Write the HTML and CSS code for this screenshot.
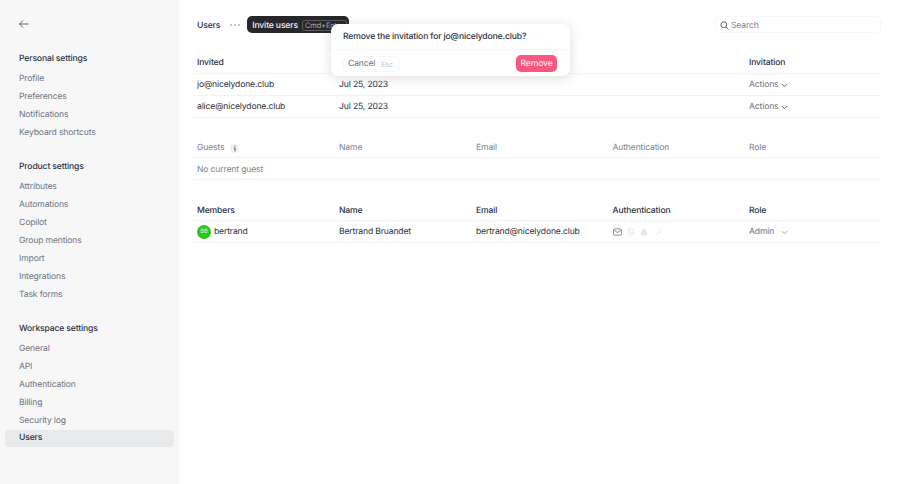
FILE: index.html
```html
<!DOCTYPE html>
<html>
  <head>
    <title>Users</title>
    <link rel="stylesheet" href="styles.css">
  </head>
  <body>
    <div class="sidebar">
      <svg class="back" width="12" height="12" viewBox="0 0 12 12" fill="none" stroke="#5c6470" stroke-width="1">
        <path d="M10.5 6H1.5M5 2.5L1.5 6L5 9.5"/>
      </svg>
      <div class="grupo">
        <div class="grupoTitulo">Personal settings</div>
        <div class="item">Profile</div>
        <div class="item">Preferences</div>
        <div class="item">Notifications</div>
        <div class="item">Keyboard shortcuts</div>
      </div>
      <div class="grupo">
        <div class="grupoTitulo">Product settings</div>
        <div class="item">Attributes</div>
        <div class="item">Automations</div>
        <div class="item">Copilot</div>
        <div class="item">Group mentions</div>
        <div class="item">Import</div>
        <div class="item">Integrations</div>
        <div class="item">Task forms</div>
      </div>
      <div class="grupo">
        <div class="grupoTitulo">Workspace settings</div>
        <div class="item">General</div>
        <div class="item">API</div>
        <div class="item">Authentication</div>
        <div class="item">Billing</div>
        <div class="item">Security log</div>
        <div class="item ativo">Users</div>
      </div>
    </div>

    <div class="main">
      <div class="topo">
        <span class="topoTitulo">Users</span>
        <svg class="dots" width="10" height="4" viewBox="0 0 10 4" fill="#5c6470">
          <circle cx="1" cy="2" r="0.7"/><circle cx="5" cy="2" r="0.7"/><circle cx="9" cy="2" r="0.7"/>
        </svg>
        <div class="invite">Invite users <span class="atalho">Cmd+Enter</span></div>
        <div class="busca">
          <svg width="9" height="9" viewBox="0 0 10 10" fill="none" stroke="#4a5160" stroke-width="1">
            <circle cx="4.2" cy="4.2" r="3.2"/><path d="M6.6 6.6L9.4 9.4"/>
          </svg>
          <span>Search</span>
        </div>
      </div>

      <div class="tabela">
        <div class="linha cabecalho">
          <div>Invited</div><div></div><div></div><div></div><div>Invitation</div>
        </div>
        <div class="linha">
          <div>jo@nicelydone.club</div><div>Jul 25, 2023</div><div></div><div></div>
          <div class="acoes">Actions
            <svg width="7" height="5" viewBox="0 0 7 5" fill="none" stroke="#5c6470"><path d="M0.8 1L3.5 3.8L6.2 1"/></svg>
          </div>
        </div>
        <div class="linha">
          <div>alice@nicelydone.club</div><div>Jul 25, 2023</div><div></div><div></div>
          <div class="acoes">Actions
            <svg width="7" height="5" viewBox="0 0 7 5" fill="none" stroke="#5c6470"><path d="M0.8 1L3.5 3.8L6.2 1"/></svg>
          </div>
        </div>
      </div>

      <div class="tabela convidados">
        <div class="linha cabecalho apagado baixo">
          <div class="comInfo">Guests
            <svg width="9" height="9" viewBox="0 0 9 9"><circle cx="4.5" cy="4.5" r="4.5" fill="#f0f0f2"/><path d="M5 1.6V2.6M3.8 4H5V7.4" fill="none" stroke="#4a5160" stroke-width="1"/></svg>
          </div>
          <div>Name</div><div>Email</div><div>Authentication</div><div>Role</div>
        </div>
        <div class="linha apagado baixo"><div>No current guest</div></div>
      </div>

      <div class="tabela">
        <div class="linha cabecalho baixo">
          <div>Members</div><div>Name</div><div>Email</div><div>Authentication</div><div>Role</div>
        </div>
        <div class="linha">
          <div class="membro"><span class="avatar">BB</span>bertrand</div>
          <div>Bertrand Bruandet</div>
          <div>bertrand@nicelydone.club</div>
          <div class="auth">
            <svg width="9" height="8" viewBox="0 0 10 8" fill="none" stroke="#5c6470" stroke-width="0.8"><rect x="0.5" y="0.5" width="9" height="7" rx="1.5"/><path d="M1 2L5 4.6L9 2"/></svg>
            <span class="authG">G</span>
            <svg width="8" height="8" viewBox="0 0 8 8" fill="#e6e7ea"><path d="M2 3.5V2.6a2 2 0 0 1 4 0V3.5H7V7.5H1V3.5Z"/></svg>
            <svg width="9" height="9" viewBox="0 0 9 9" fill="none" stroke="#eeeff1"><circle cx="6" cy="3" r="2"/><path d="M4.5 4.5L1 8"/></svg>
          </div>
          <div class="role">Admin
            <svg width="7" height="5" viewBox="0 0 7 5" fill="none" stroke="#a4a9b2"><path d="M0.8 1L3.5 3.8L6.2 1"/></svg>
          </div>
        </div>
      </div>
    </div>

    <div class="popover">
      <div class="popTexto">Remove the invitation for jo@nicelydone.club?</div>
      <div class="popAcoes">
        <div class="cancelar">Cancel <span>Esc</span></div>
        <div class="remover">Remove</div>
      </div>
    </div>
  </body>
</html>
```

FILE: styles.css
```css
*{
  box-sizing: border-box;
}
body{
  margin: 0;
  height: 484px;
  display: flex;
  overflow: hidden;
  background-color: #fff;
  font-family: Inter, sans-serif;
  font-size: 8.6px;
  letter-spacing: -0.15px;
  text-rendering: geometricPrecision;
  color: #2c3240;
}
.sidebar{
  width: 179px;
  flex-shrink: 0;
  padding: 18px 5px 0 5px;
  background-color: #f7f7f8;
}
.back{
  display: block;
  margin-left: 13px;
  margin-bottom: 20px;
}
.grupo{
  margin-bottom: 16px;
}
.grupoTitulo{
  height: 18px;
  line-height: 18px;
  margin-bottom: 2px;
  padding-left: 14px;
  font-weight: 500;
  color: #2c3240;
}
.item{
  height: 18px;
  line-height: 18px;
  padding-left: 14px;
  color: #70757f;
}
.ativo{
  height: 16.5px;
  line-height: 16px;
  border-radius: 4px;
  background-color: #e9eaec;
  font-weight: 500;
  color: #2c3240;
}
.main{
  flex: 1;
  padding: 16px 19px 0 14px;
}
.topo{
  display: flex;
  align-items: center;
  height: 17px;
  margin-bottom: 19px;
  padding-left: 4px;
}
.topoTitulo{
  padding-top: 2px;
  font-weight: 500;
}
.dots{
  margin-left: 10px;
}
.invite{
  display: flex;
  align-items: center;
  gap: 4px;
  height: 17px;
  width: 102px;
  margin-left: 7px;
  padding: 2px 0 0 5px;
  overflow: hidden;
  white-space: nowrap;
  border-radius: 5px;
  background-color: #27272b;
  color: #f2f2f3;
  font-weight: 500;
}
.atalho{
  padding: 0 2px;
  border: 1px solid #5a5a60;
  border-radius: 3px;
  font-size: 7.5px;
  line-height: 9px;
  font-weight: 400;
  color: #a9a9ae;
}
.busca{
  display: flex;
  align-items: center;
  gap: 2px;
  width: 166px;
  height: 17px;
  margin-left: auto;
  padding: 1px 0 0 4px;
  border: 1px solid #f6f6f7;
  border-radius: 5px;
  color: #7d8490;
}
.busca span{
  padding-top: 1px;
}
.tabela{
  margin-bottom: 18px;
}
.convidados{
  margin-bottom: 19px;
}
.linha{
  display: grid;
  grid-template-columns: 142px 137px 136.5px 136.5px 1fr;
  align-items: center;
  height: 22px;
  padding: 1px 0 0 4px;
  border-bottom: 1px solid #f2f2f4;
}
.baixo{
  padding-top: 3px;
}
.cabecalho{
  font-weight: 500;
}
.apagado{
  font-weight: 400;
  color: #7d8490;
}
.comInfo, .acoes, .role, .membro, .auth{
  display: flex;
  align-items: center;
}
.comInfo{
  gap: 6px;
}
.acoes{
  gap: 3px;
  color: #70757f;
}
.role{
  gap: 7px;
  color: #70757f;
}
.membro{
  gap: 3px;
}
.avatar{
  width: 14px;
  height: 14px;
  border-radius: 50%;
  background-color: #2fc41e;
  color: #d8f5d4;
  font-size: 6px;
  line-height: 14px;
  text-align: center;
}
.auth{
  gap: 6px;
}
.authG{
  font-size: 9px;
  font-weight: 500;
  color: #e6e7ea;
}
.popover{
  position: absolute;
  left: 331px;
  top: 24px;
  width: 239px;
  height: 52px;
  border-radius: 7px;
  background-color: #fff;
  box-shadow: 0 2px 12px rgba(30,35,50,0.16);
}
.popTexto{
  height: 26px;
  padding: 8px 0 0 12px;
  font-weight: 500;
  border-bottom: 1px solid #f7f7f8;
}
.popAcoes{
  display: flex;
  justify-content: space-between;
  align-items: center;
  padding: 5px 13px 0 12px;
}
.cancelar{
  display: flex;
  align-items: center;
  gap: 6px;
  width: 57px;
  height: 16px;
  padding: 1px 0 0 4px;
  border: 1px solid #f6f6f7;
  border-radius: 5px;
  color: #70757f;
}
.cancelar span{
  font-size: 7px;
  color: #b6bac1;
}
.remover{
  width: 41px;
  height: 17px;
  line-height: 18px;
  text-align: center;
  border-radius: 5px;
  background-color: #f9577f;
  color: #fde3ea;
  font-weight: 500;
}
```
